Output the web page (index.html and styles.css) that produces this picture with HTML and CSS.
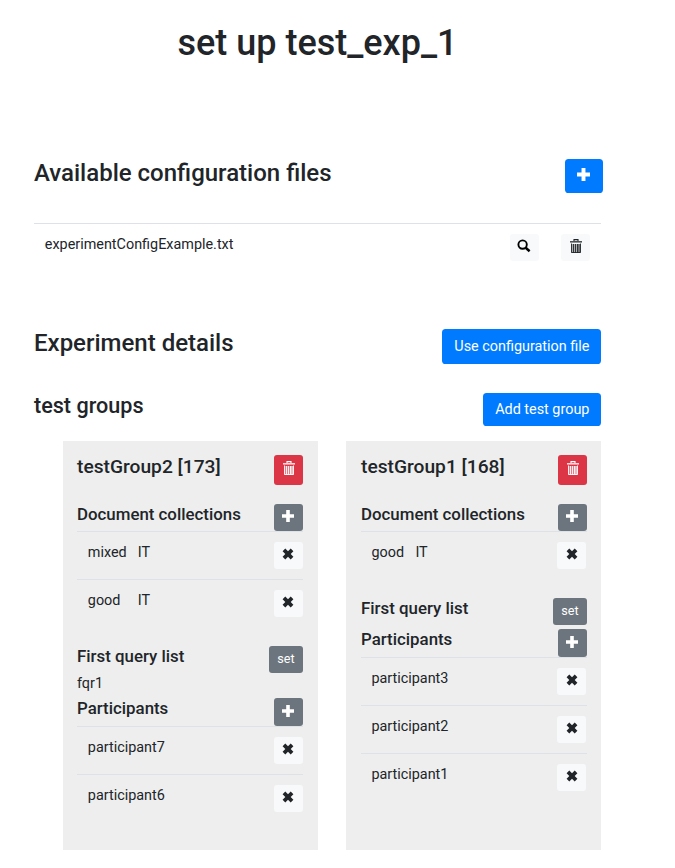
FILE: index.html
```html
<!DOCTYPE html>
<html lang="en">
<head>
<meta charset="utf-8">
<title>set up test_exp_1</title>
<link rel="stylesheet" href="styles.css">
</head>
<body>
<svg class="sprite" aria-hidden="true">
  <symbol id="plus" viewBox="0 0 12 12"><path d="M4.200 0h3.600v4.200H12v3.600H7.800V12H4.200V7.800H0V4.200h4.200z"/></symbol>
  <symbol id="cross" viewBox="0 0 12 12"><path d="M.6 3.300 3.300.6 6 3.300 8.700.6l2.700 2.700L8.700 6l2.700 2.700-2.700 2.700L6 8.700l-2.700 2.700L.6 8.700 3.300 6z"/></symbol>
  <symbol id="trash" viewBox="0 0 12 14"><path d="M4 2V.6h4V2" fill="none" stroke="currentColor" stroke-width="1.100"/><path d="M0 2h12v1.600H0z" opacity=".8"/><path d="M1 5h10v9H1z" opacity=".35"/><path d="M1.500 4.500v9h9v-9M3.500 5v9M5.500 5v9M7.500 5v9M9 5v9" fill="none" stroke="currentColor" stroke-width=".9"/></symbol>
  <symbol id="search" viewBox="0 0 14 14"><circle cx="5.600" cy="5.600" r="4.200" fill="none" stroke="currentColor" stroke-width="1.900"/><path d="m8.700 8.700 3.900 3.500" fill="none" stroke="currentColor" stroke-width="2.500"/></symbol>
</svg>
<main class="page">
  <h1 class="title">set up test_exp_1</h1>

  <section class="files">
    <header class="bar files-bar">
      <h3 class="heading">Available configuration files</h3>
      <button class="btn primary add-file"><svg class="i-plus"><use href="#plus"/></svg></button>
    </header>
    <div class="row file-row">
      <span class="name">experimentConfigExample.txt</span>
      <button class="btn small light"><svg class="i-search"><use href="#search"/></svg></button>
      <button class="btn small light"><svg class="i-trash"><use href="#trash"/></svg></button>
    </div>
  </section>

  <header class="bar details-bar">
    <h3 class="heading">Experiment details</h3>
    <button class="btn primary wide">Use configuration file</button>
  </header>
  <header class="bar groups-bar">
    <h4 class="heading sub">test groups</h4>
    <button class="btn primary wide add-group">Add test group</button>
  </header>

  <section class="groups">
    <article class="card">
      <header class="bar card-head"><h5 class="group-name">testGroup2 [173]</h5><button class="btn small danger"><svg class="i-trash"><use href="#trash"/></svg></button></header>
      <header class="bar list-head"><h6 class="label">Document collections</h6><button class="btn small secondary"><svg class="i-plus"><use href="#plus"/></svg></button></header>
      <div class="row"><span class="collection">mixed</span><span class="name">IT</span><button class="btn small light"><svg class="i-cross"><use href="#cross"/></svg></button></div>
      <div class="row"><span class="collection">good</span><span class="name">IT</span><button class="btn small light"><svg class="i-cross"><use href="#cross"/></svg></button></div>
      <header class="bar query"><h6 class="label">First query list</h6><button class="btn small secondary set">set</button></header>
      <p class="query-value">fqr1</p>
      <header class="bar list-head people"><h6 class="label">Participants</h6><button class="btn small secondary"><svg class="i-plus"><use href="#plus"/></svg></button></header>
      <div class="row"><span class="name">participant7</span><button class="btn small light"><svg class="i-cross"><use href="#cross"/></svg></button></div>
      <div class="row"><span class="name">participant6</span><button class="btn small light"><svg class="i-cross"><use href="#cross"/></svg></button></div>
    </article>
    <article class="card second">
      <header class="bar card-head"><h5 class="group-name">testGroup1 [168]</h5><button class="btn small danger"><svg class="i-trash"><use href="#trash"/></svg></button></header>
      <header class="bar list-head"><h6 class="label">Document collections</h6><button class="btn small secondary"><svg class="i-plus"><use href="#plus"/></svg></button></header>
      <div class="row"><span class="collection narrow">good</span><span class="name">IT</span><button class="btn small light"><svg class="i-cross"><use href="#cross"/></svg></button></div>
      <header class="bar query"><h6 class="label">First query list</h6><button class="btn small secondary set">set</button></header>
      <header class="bar list-head people"><h6 class="label">Participants</h6><button class="btn small secondary"><svg class="i-plus"><use href="#plus"/></svg></button></header>
      <div class="row"><span class="name">participant3</span><button class="btn small light"><svg class="i-cross"><use href="#cross"/></svg></button></div>
      <div class="row"><span class="name">participant2</span><button class="btn small light"><svg class="i-cross"><use href="#cross"/></svg></button></div>
      <div class="row"><span class="name">participant1</span><button class="btn small light"><svg class="i-cross"><use href="#cross"/></svg></button></div>
    </article>
  </section>
</main>
</body>
</html>
```
FILE: styles.css
```css
* { box-sizing: border-box; }
body { margin: 0; background: #fff; color: #212529; font: 14.4px/22px Roboto, sans-serif; }
h1, h3, h4, h5, h6, p { margin: 0; font-weight: 500; }
.sprite { display: none; }
.page { width: 567px; margin-left: 34px; padding-top: 21px; }
.title { font-size: 36px; line-height: 45px; text-align: center; height: 138px; }

.bar { display: flex; justify-content: space-between; align-items: flex-start; }
.heading { font-size: 24px; line-height: 28px; }
.sub { font-size: 21.600px; line-height: 26px; }
.files-bar { height: 64px; }
.add-file { width: 38px; height: 34px; margin-right: -2px; }
.details-bar { height: 64px; }
.groups-bar { height: 48px; }

.btn { display: flex; flex: none; justify-content: center; align-items: center; border: 0; border-radius: 3.600px; padding: 0; font: 14.400px/22px Roboto, sans-serif; color: #fff; }
.primary { background: #007bff; }
.secondary { background: #6c757d; }
.danger { background: #dc3545; }
.light { background: #f8f9fa; color: #212529; }
.wide { height: 35px; padding: 0 11.600px 0 12.400px; }
.add-group { height: 33px; }
.small { width: 29px; height: 27px; border-radius: 3px; }
.danger.small { height: 30px; }
.set.small { width: 34px; font-size: 12.600px; padding-bottom: 2px; }

.btn svg { display: block; fill: currentColor; margin: 0 1px 3px 0; }
.i-plus { width: 12px; height: 12px; }
.add-file .i-plus { width: 13px; height: 13px; }
.i-cross { width: 12px; height: 12px; }
.i-trash { width: 12px; height: 14px; }
.btn .i-trash { margin: 0 0 4px 1px; }
.btn .i-cross { margin-right: .4px; }
.i-search { width: 14px; height: 14px; color: #000; }

.row { display: flex; align-items: flex-start; height: 48px; border-top: 1px solid #dee2e6; padding: 10px 0 0 10.800px; }
.name { flex: 1; }
.file-row { height: 106px; padding-right: 11px; gap: 22px; }

.groups { display: grid; grid-template-columns: 255px 255px; justify-content: end; gap: 28px; }
.card { height: 409px; background: #eee; padding: 14px 15px 0 14px; }
.second { padding: 14px 14px 0 15px; }
.second .row { padding-left: 10.400px; }
.second .row .btn { margin-right: 1px; }
.second .row .i-cross { margin-right: 0; }
.card-head { height: 49px; }
.group-name { font-size: 19.200px; line-height: 24px; }
.label { font-size: 16.850px; line-height: 21px; }
.list-head { height: 27px; }
.collection { width: 50px; }
.narrow { width: 44px; }
.query { margin-top: 19px; height: 27px; }
.query-value { font-weight: 400; line-height: 22px; height: 25px; }
.people { height: 28px; }
.people .btn { height: 28px; }
.second .people { margin-top: 4px; }
```
